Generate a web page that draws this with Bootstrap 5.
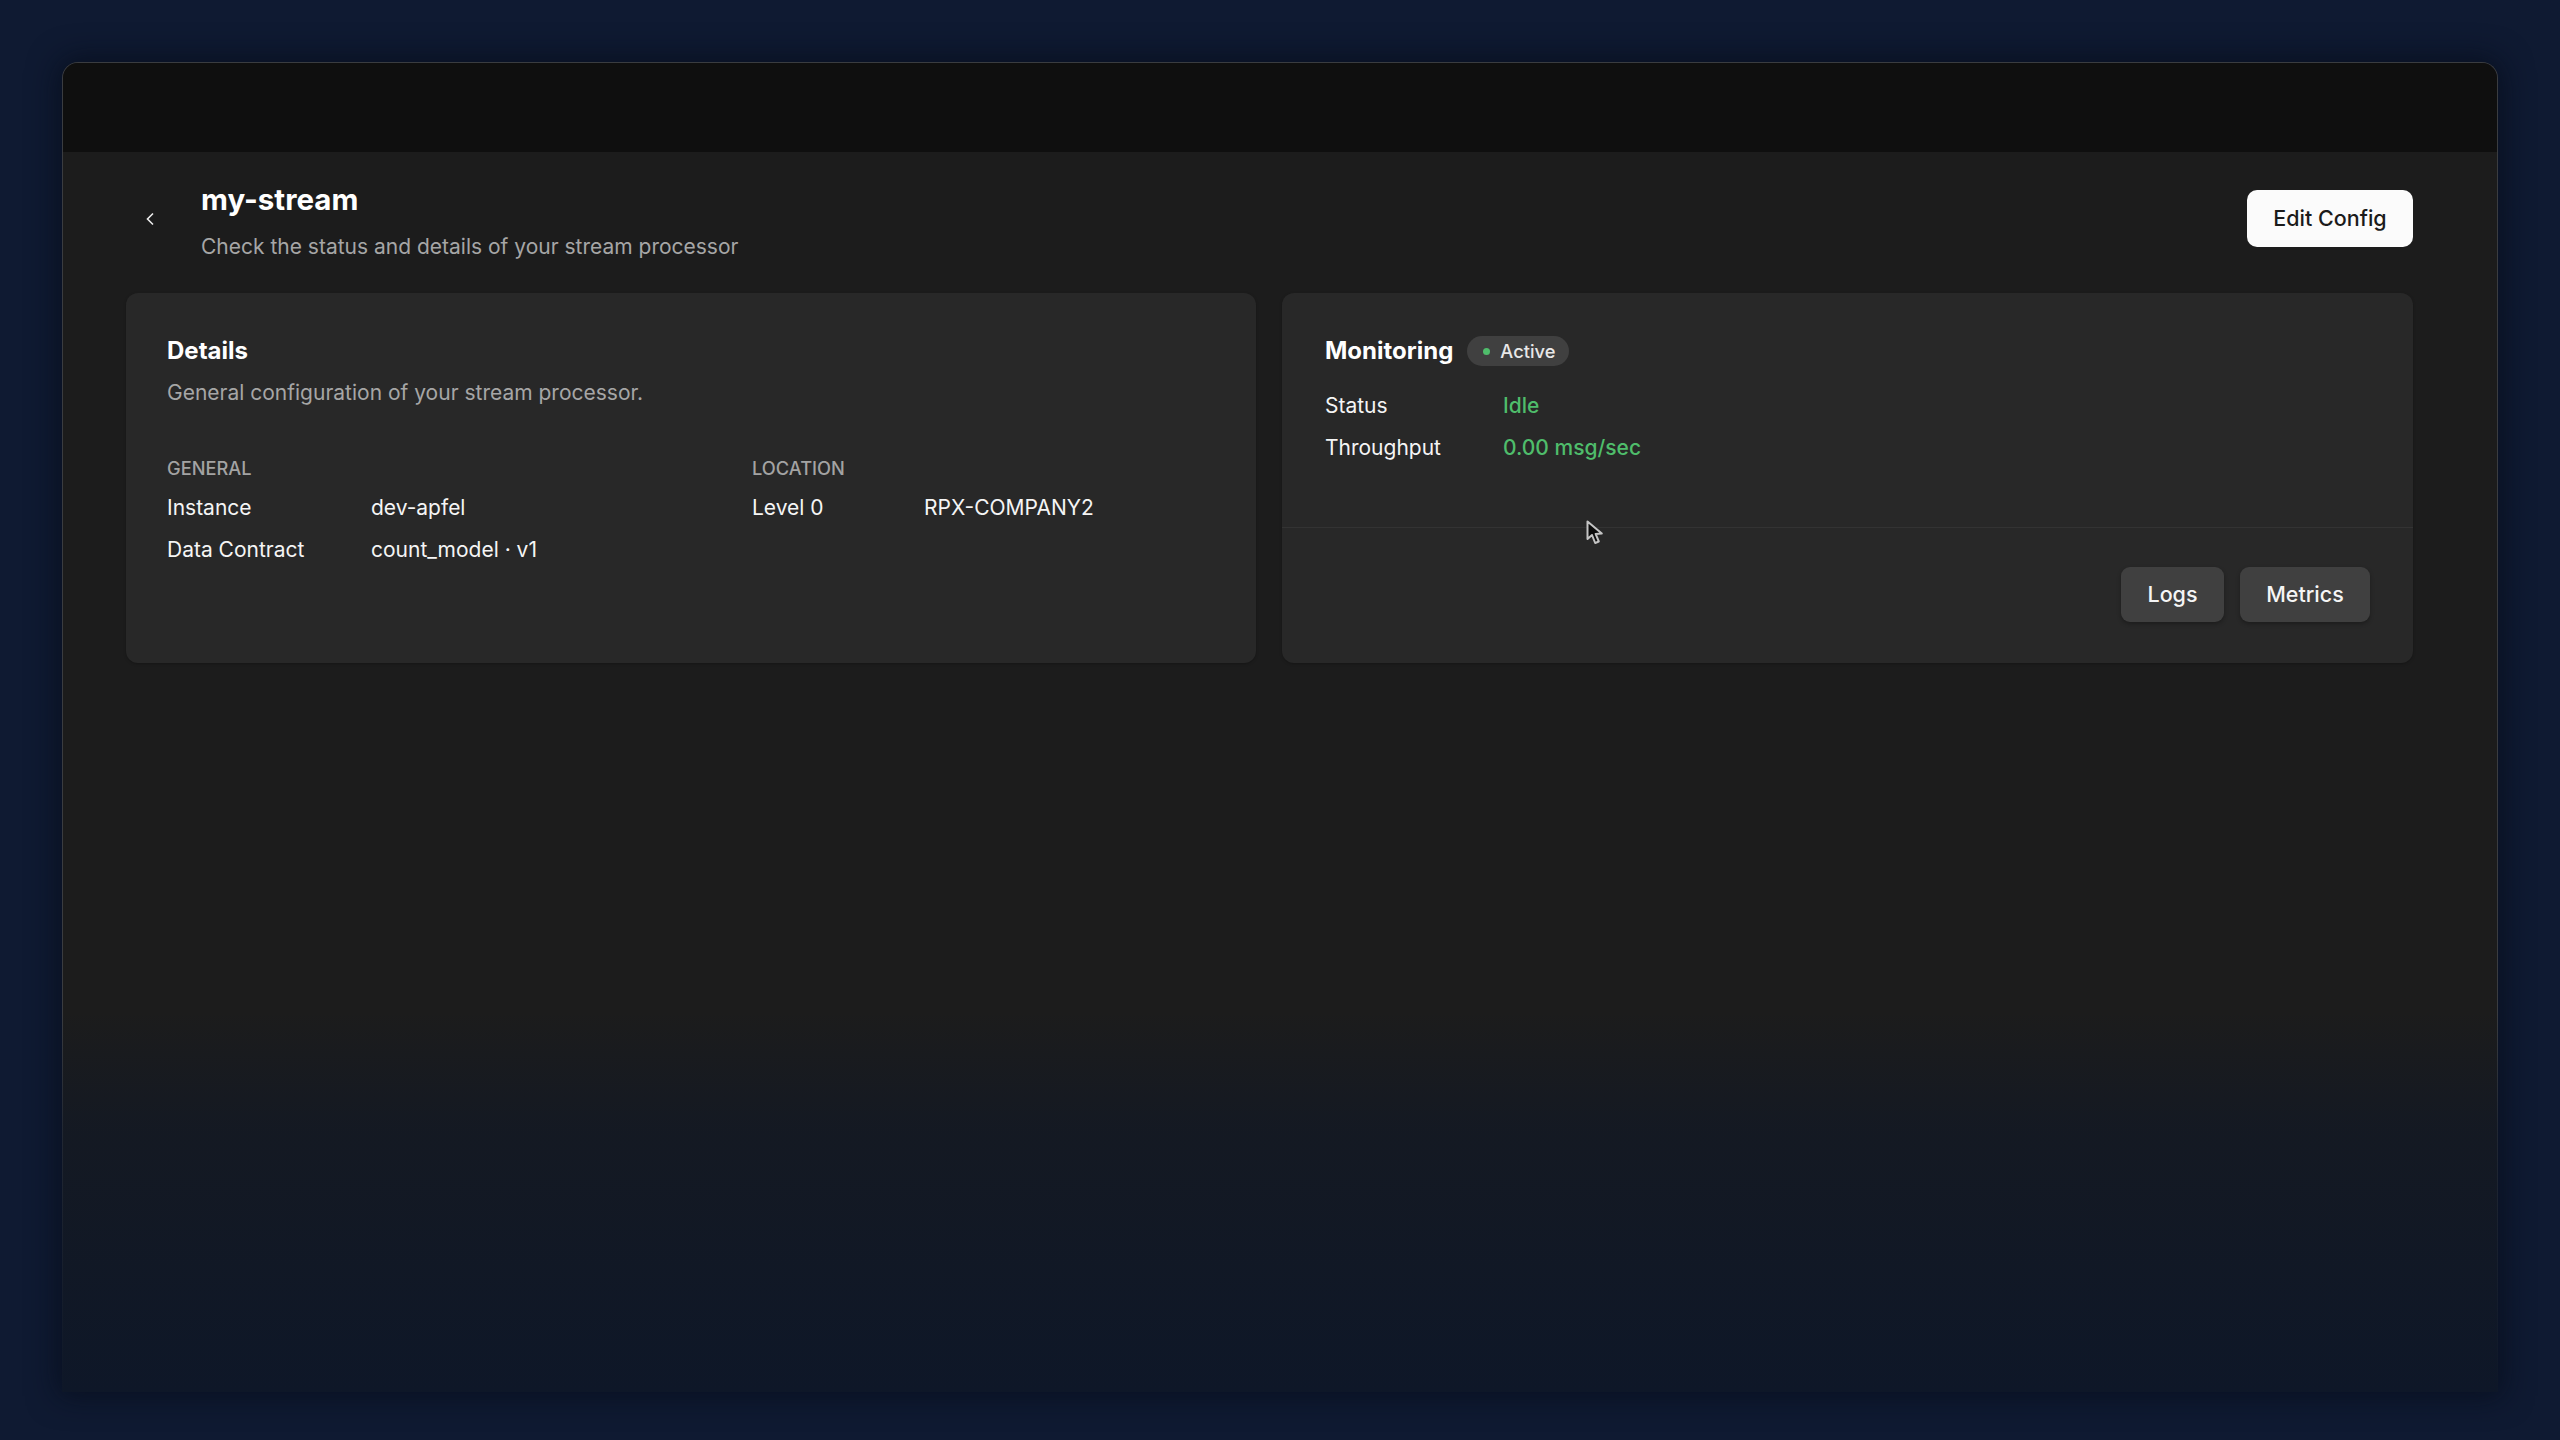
<!DOCTYPE html>
<html lang="en">
<head>
    <meta charset="UTF-8">
    <meta name="viewport" content="width=device-width, initial-scale=1.0">
    <title>my-stream</title>
    <link href="https://cdn.jsdelivr.net/npm/bootstrap@5.3.0/dist/css/bootstrap.min.css" rel="stylesheet">
    <style>
        html, body {
            height: 100%;
        }
        body {
            font-family: Inter, "Liberation Sans", sans-serif;
            font-size: 21px;
            background-color: #0f1a32;
            color: #f5f5f5;
            padding: 62px 62px 0;
            overflow: hidden;
        }
        .app-window {
            position: relative;
            height: 1330px;
            background-color: #1c1c1c;
            border: 1px solid #3a3c40;
            border-bottom: 0;
            border-radius: 16px 16px 0 0;
            box-shadow: 0 0 30px 4px rgba(6, 12, 24, .7);
        }
        .app-fade {
            position: absolute;
            inset: 948px -1px 0 -1px;
            background: linear-gradient(to bottom, rgba(14, 23, 40, 0) 0%, rgba(14, 23, 40, .55) 30%, rgba(14, 23, 40, 1) 100%);
        }
        .app-topbar {
            height: 89px;
            background-color: #0f0f0f;
            border-radius: 15px 15px 0 0;
        }
        .app-content {
            padding: 29px 84px 0 63px;
        }
        .back-link {
            width: 75px;
            padding: 31px 0 0 19px;
            color: #ececec;
        }
        .page-title {
            font-size: 29.5px;
            font-weight: 650;
            line-height: 36px;
            color: #fff;
            margin: 0 0 12px;
        }
        .page-sub, .card-sub {
            font-size: 21px;
            line-height: 36px;
            color: #a6a6a6;
            margin: 0;
        }
        .btn.btn-edit {
            width: 166px;
            height: 57px;
            margin-top: 9px;
            background-color: #fbfbfb;
            color: #1b1b1b;
            font-size: 21.5px;
            font-weight: 500;
            border: 0;
            border-radius: 10px;
        }
        .stream-cards {
            display: grid;
            grid-template-columns: 1130px 1131px;
            column-gap: 26px;
            margin-top: 28px;
            height: 370px;
        }
        .stream-cards .card {
            background-color: #282828;
            border: 0;
            border-radius: 12px;
            color: #f5f5f5;
            box-shadow: 0 1px 3px rgba(0, 0, 0, .25);
        }
        .stream-cards .card-body {
            padding: 40px 43px 0;
        }
        .stream-cards .card-details {
            padding-left: 41px;
        }
        .card-heading {
            font-size: 24px;
            font-weight: 650;
            line-height: 36px;
            color: #fff;
            margin: 0;
        }
        .card-sub {
            margin-top: 6px;
        }
        .detail-cols {
            display: grid;
            grid-template-columns: 585px 1fr;
            margin-top: 43px;
        }
        .col-label {
            font-size: 18.25px;
            font-weight: 500;
            line-height: 28px;
            color: #a3a3a3;
            margin-bottom: 5px;
        }
        .kv-row {
            display: flex;
            height: 42px;
            line-height: 42px;
        }
        .kv-key {
            width: 204px;
        }
        .kv-key-short {
            width: 172px;
        }
        .kv-key-mon {
            width: 178px;
        }
        .kv-good {
            color: #4fbd6b;
            font-weight: 500;
        }
        .monitor-head {
            gap: 14px;
            margin-bottom: 16px;
        }
        .status-pill {
            display: inline-flex;
            align-items: center;
            height: 30px;
            padding: 0 14px 0 16px;
            gap: 10px;
            background-color: #404040;
            color: #e8e8e8;
            font-size: 18.25px;
            font-weight: 500;
        }
        .status-dot {
            width: 7px;
            height: 7px;
            border-radius: 50%;
            background-color: #4fbd6b;
        }
        .stream-cards .card-footer {
            height: 136px;
            padding: 0 43px 41px 0;
            background: transparent;
            border-top: 1px solid #333;
        }
        .btn.btn-soft {
            height: 55px;
            background-color: #404040;
            color: #f5f5f5;
            font-size: 21.5px;
            font-weight: 500;
            border: 0;
            border-radius: 9px;
            box-shadow: 0 2px 4px rgba(0, 0, 0, .3);
        }
        .btn-logs { width: 103px; }
        .btn-metrics { width: 130px; }
        .mouse-cursor {
            position: absolute;
            left: 1523px;
            top: 457px;
        }
    </style>
</head>
<body>
    <div class="app-window">
        <div class="app-topbar"></div>
        <div class="app-content">
            <div class="d-flex align-items-start">
                <div class="back-link d-flex">
                    <svg width="10" height="14" viewBox="0 0 10 14" fill="none" stroke="currentColor" stroke-width="1.6"><path d="M8 1.5 2.5 7 8 12.5"/></svg>
                </div>
                <div class="flex-grow-1 me-3">
                    <h1 class="page-title">my-stream</h1>
                    <p class="page-sub">Check the status and details of your stream processor</p>
                </div>
                <button class="btn btn-edit">Edit Config</button>
            </div>
            <div class="stream-cards">
                <div class="card">
                    <div class="card-body card-details">
                        <h2 class="card-heading">Details</h2>
                        <p class="card-sub">General configuration of your stream processor.</p>
                        <div class="detail-cols">
                            <div>
                                <div class="col-label">GENERAL</div>
                                <div class="kv-row"><span class="kv-key">Instance</span><span>dev-apfel</span></div>
                                <div class="kv-row"><span class="kv-key">Data Contract</span><span>count_model · v1</span></div>
                            </div>
                            <div>
                                <div class="col-label">LOCATION</div>
                                <div class="kv-row"><span class="kv-key-short">Level 0</span><span>RPX-COMPANY2</span></div>
                            </div>
                        </div>
                    </div>
                </div>
                <div class="card">
                    <div class="card-body">
                        <div class="d-flex align-items-center monitor-head">
                            <h2 class="card-heading">Monitoring</h2>
                            <span class="badge rounded-pill status-pill"><span class="status-dot"></span>Active</span>
                        </div>
                        <div class="kv-row"><span class="kv-key-mon">Status</span><span class="kv-good">Idle</span></div>
                        <div class="kv-row"><span class="kv-key-mon">Throughput</span><span class="kv-good">0.00 msg/sec</span></div>
                    </div>
                    <div class="card-footer d-flex justify-content-end align-items-end gap-3">
                        <button class="btn btn-soft btn-logs">Logs</button>
                        <button class="btn btn-soft btn-metrics">Metrics</button>
                    </div>
                </div>
            </div>
        </div>
        <div class="app-fade"></div>
        <svg class="mouse-cursor" width="18" height="26" viewBox="0 0 18 26"><path d="M1.5 1.5V19l4.5-4 3.2 8 3.6-1.5-3.2-7.6 6.2-.4z" fill="#0c0c0c" stroke="#c4c4c4" stroke-width="2" stroke-linejoin="round"/></svg>
    </div>
</body>
</html>
